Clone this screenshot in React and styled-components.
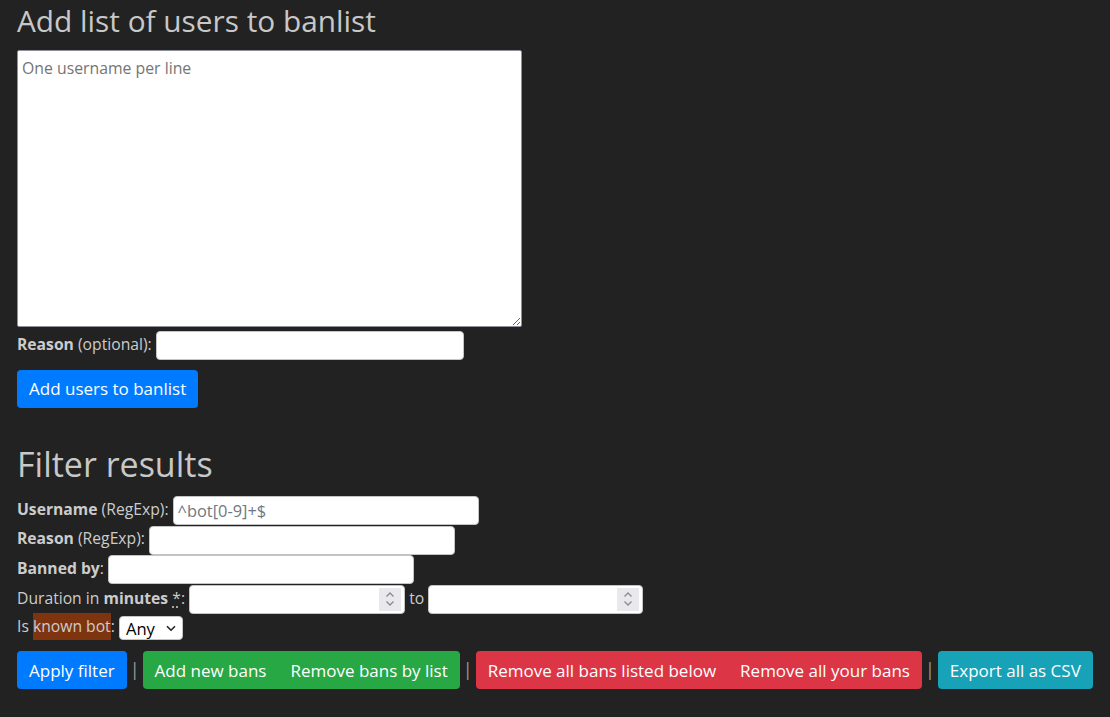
import React from 'react'
import styled, { createGlobalStyle } from 'styled-components'

const GlobalStyle = createGlobalStyle`
	body {
		margin: 0;
		background-color: #222222;
		color: #cccccc;
		font-family: 'Open Sans', 'Noto Sans', sans-serif;
		font-size: 15.7px;
	}
`

const Page = styled.main`
	padding: 0 17px;
`

const Heading = styled.h2`
	margin: 0;
	font-weight: 400;
	font-size: ${(p) => p.size}px;
	line-height: 1.2;
	color: #c8c8c8;
	padding-top: ${(p) => p.top}px;
	padding-bottom: ${(p) => p.bottom}px;
`

const ListArea = styled.textarea`
	display: block;
	box-sizing: border-box;
	width: 505px;
	height: 277px;
	margin: 0;
	padding: 6px 4px 4px;
	border: 1px solid #8f8f9d;
	border-radius: 2px;
	background: #fff;
	font-family: inherit;
	font-size: 15.8px;
	color: #333;

	&::placeholder {
		color: #757575;
	}
`

const Row = styled.div`
	height: ${(p) => p.h || 29.7}px;
	line-height: ${(p) => p.h || 29.7}px;
	white-space: nowrap;

	input,
	select {
		vertical-align: middle;
	}
`

const Input = styled.input`
	box-sizing: border-box;
	width: ${(p) => p.w || 306}px;
	height: 29px;
	margin: 0;
	padding: 1px 4px;
	border: 1px solid #c4c4c4;
	border-radius: 4px;
	background: #fff;
	font-family: inherit;
	font-size: 16.4px;
	color: #333;

	&::placeholder {
		color: #6f7784;
	}

	&::-webkit-inner-spin-button,
	&::-webkit-outer-spin-button {
		-webkit-appearance: none;
		margin: 0;
	}
`

const NumberWrap = styled.span`
	position: relative;
	display: inline-block;
	vertical-align: middle;
	line-height: 0;
`

const Spinner = styled.span`
	position: absolute;
	right: 4px;
	top: 3px;
	width: 22px;
	height: 23px;
	background: #e9e9ed;
	display: flex;
	align-items: center;
	justify-content: center;
`

const Abbr = styled.abbr`
	text-decoration: underline dotted;
	text-underline-offset: 3px;
`

const Highlight = styled.span`
	background-color: #7f3410;
	padding: 2px 0 3px;
`

const SelectWrap = styled.span`
	position: relative;
	display: inline-block;
	vertical-align: middle;
	line-height: 0;
`

const Select = styled.select`
	appearance: none;
	box-sizing: border-box;
	width: 64px;
	height: 24px;
	margin: 0;
	padding: 0 20px 0 6px;
	border: 1px solid #c4c4c4;
	border-radius: 4px;
	background: #fff;
	color: #000;
	font-family: inherit;
	font-size: 16.6px;
`

const Chevron = styled.svg`
	position: absolute;
	right: 7px;
	top: 9px;
	pointer-events: none;
`

const Button = styled.button`
	box-sizing: border-box;
	height: 38px;
	margin: 0;
	padding: 0 12px;
	border: 0;
	border-radius: 4px;
	background-color: ${(p) => p.bg};
	color: #fff;
	font-family: inherit;
	font-size: 17px;
	line-height: 1.5;
	white-space: nowrap;
	cursor: pointer;
`

const Group = styled.div`
	display: inline-flex;

	${Button} {
		border-radius: 0;
	}
	${Button}:first-child {
		border-radius: 4px 0 0 4px;
	}
	${Button}:last-child {
		border-radius: 0 4px 4px 0;
	}
`

const Toolbar = styled.div`
	display: flex;
	align-items: center;
	gap: 3px;
	margin-top: 12px;
`

const Sep = styled.span`
	color: #9a9a9a;
	font-size: 18px;
	line-height: 1;
	margin-top: -3px;
`

const Spin = () => (
	<Spinner>
		<svg width='12' height='18' viewBox='0 0 12 18' fill='none' stroke='#8a8a95' strokeWidth='1.3'>
			<path d='M2.5 6.5 L6 3 L9.5 6.5' />
			<path d='M2.5 11.5 L6 15 L9.5 11.5' />
		</svg>
	</Spinner>
)

const App = () => (
	<Page>
		<GlobalStyle />
		<Heading size={29.8} top={3} bottom={11}>
			Add list of users to banlist
		</Heading>
		<ListArea placeholder='One username per line' />
		<Row h={35}>
			<b>Reason</b> (optional): <Input w={308} />
		</Row>
		<div style={{ marginTop: 8 }}>
			<Button bg='#007bff'>Add users to banlist</Button>
		</div>
		<Heading size={34} top={36} bottom={10}>
			Filter results
		</Heading>
		<Row>
			<b>Username</b> (RegExp): <Input placeholder='^bot[0-9]+$' />
		</Row>
		<Row>
			<b>Reason</b> (RegExp): <Input />
		</Row>
		<Row>
			<b>Banned by</b>: <Input />
		</Row>
		<Row>
			Duration in <b>minutes</b> <Abbr title='minutes'>*</Abbr>:{' '}
			<NumberWrap>
				<Input type='number' w={216} />
				<Spin />
			</NumberWrap>{' '}
			to{' '}
			<NumberWrap>
				<Input type='number' w={215} />
				<Spin />
			</NumberWrap>
		</Row>
		<Row h={26}>
			Is <Highlight>known bot</Highlight>:{' '}
			<SelectWrap>
				<Select defaultValue='any'>
					<option value='any'>Any</option>
					<option value='yes'>Yes</option>
					<option value='no'>No</option>
				</Select>
				<Chevron width='10' height='7' viewBox='0 0 10 7' fill='none' stroke='#222' strokeWidth='1.6'>
					<path d='M1 1.2 L5 5.2 L9 1.2' />
				</Chevron>
			</SelectWrap>
		</Row>
		<Toolbar>
			<Button bg='#007bff'>Apply filter</Button>
			<Sep>|</Sep>
			<Group>
				<Button bg='#28a745'>Add new bans</Button>
				<Button bg='#28a745'>Remove bans by list</Button>
			</Group>
			<Sep>|</Sep>
			<Group>
				<Button bg='#dc3545'>Remove all bans listed below</Button>
				<Button bg='#dc3545'>Remove all your bans</Button>
			</Group>
			<Sep>|</Sep>
			<Button bg='#17a2b8'>Export all as CSV</Button>
		</Toolbar>
	</Page>
)

export default App
